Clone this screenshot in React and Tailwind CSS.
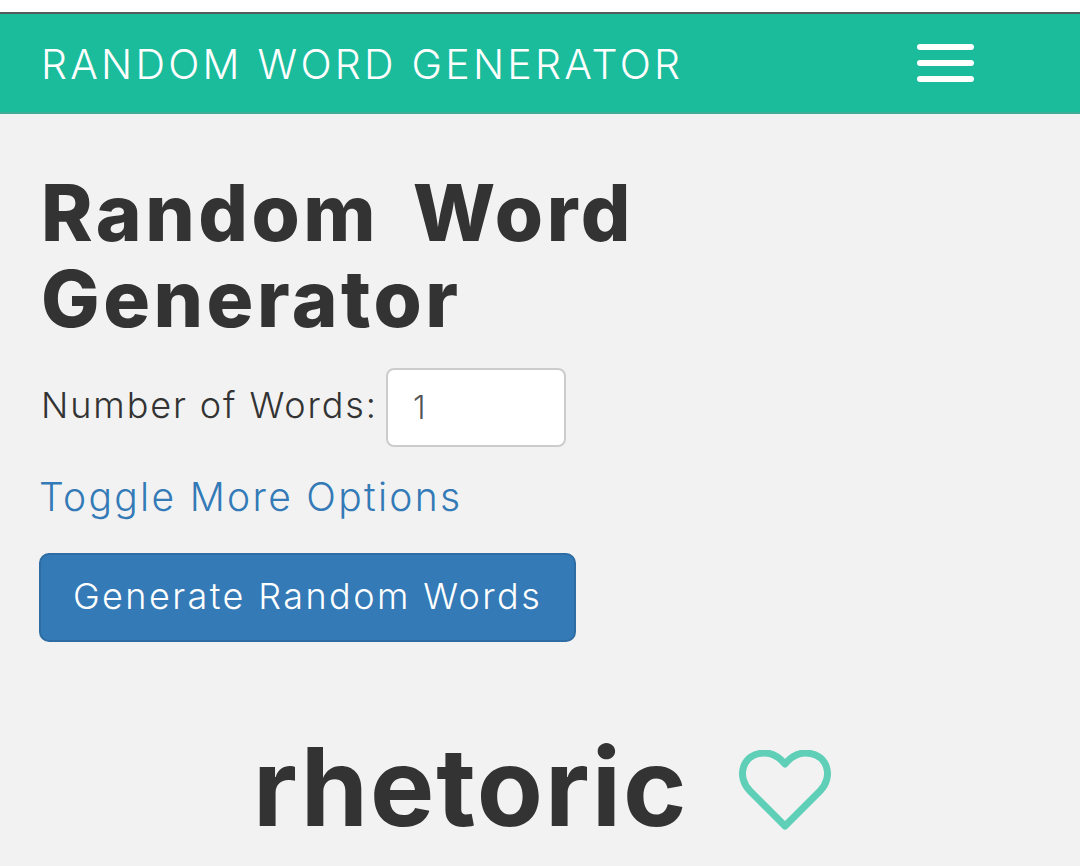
import React from 'react';

const App = () => {
    return (
        <div className="w-[1080px] h-[866px] overflow-hidden bg-white font-['Inter','Liberation_Sans',sans-serif]">
            <div className="h-3"></div>
            <header className="h-[102px] flex items-center justify-between bg-[#1abc9c] border-t-2 border-t-[#555a5a] border-b-2 border-b-[#3fae98] pl-[41px] pr-[106px]">
                <span className="pt-[2px] text-[41px] font-light text-white leading-none tracking-[3.25px] whitespace-nowrap">RANDOM WORD GENERATOR</span>
                <button type="button" className="w-[57px] flex flex-col gap-[10px]" aria-label="Menu">
                    <span className="block h-[6px] rounded-full bg-white"></span>
                    <span className="block h-[6px] rounded-full bg-white"></span>
                    <span className="block h-[6px] rounded-full bg-white"></span>
                </button>
            </header>

            <main className="h-[752px] bg-[#f2f2f2] pl-[39px] pt-[56px] text-[#333333]">
                <h1 className="pl-[2px] text-[78px] font-extrabold leading-[86px] w-[660px] tracking-[3.5px] [word-spacing:13px]">Random Word Generator</h1>

                <div className="mt-[26px] flex items-center gap-[8px]">
                    <label className="pl-[2px] pb-[5px] text-[36px] font-light leading-none tracking-[1.9px] whitespace-nowrap">Number of Words:</label>
                    <input
                        type="text"
                        defaultValue="1"
                        className="w-[180px] h-[79px] bg-white border-2 border-[#cccccc] rounded-[8px] pl-[25px] text-[32px] font-light text-[#555555] outline-none"
                    />
                </div>

                <a href="#" className="block mt-[26px] text-[39px] font-light leading-[48px] tracking-[2.3px] text-[#337ab7]">Toggle More Options</a>

                <button type="button" className="block mt-[32px] pb-[4px] w-[537px] h-[89px] bg-[#337ab7] border-2 border-[#2e6da4] rounded-[10px] text-[36px] font-light tracking-[2.4px] text-white whitespace-nowrap">
                    Generate Random Words
                </button>

                <div className="mt-[90px] flex items-center pl-[214px] gap-[50px]">
                    <span className="text-[108px] font-bold leading-[110px] tracking-[2px] whitespace-nowrap">rhetoric</span>
                    <svg className="mt-[6px]" width="92" height="80" viewBox="0 0 92 80" fill="none" stroke="#5fcfb8" strokeWidth="7" strokeLinejoin="round">
                        <path d="M46 76 L11 41 C-3 27 3 3 26 3 C34 3 41 8 46 14 C51 8 58 3 66 3 C89 3 95 27 81 41 Z" />
                    </svg>
                </div>
            </main>
        </div>
    );
};

export default App;
